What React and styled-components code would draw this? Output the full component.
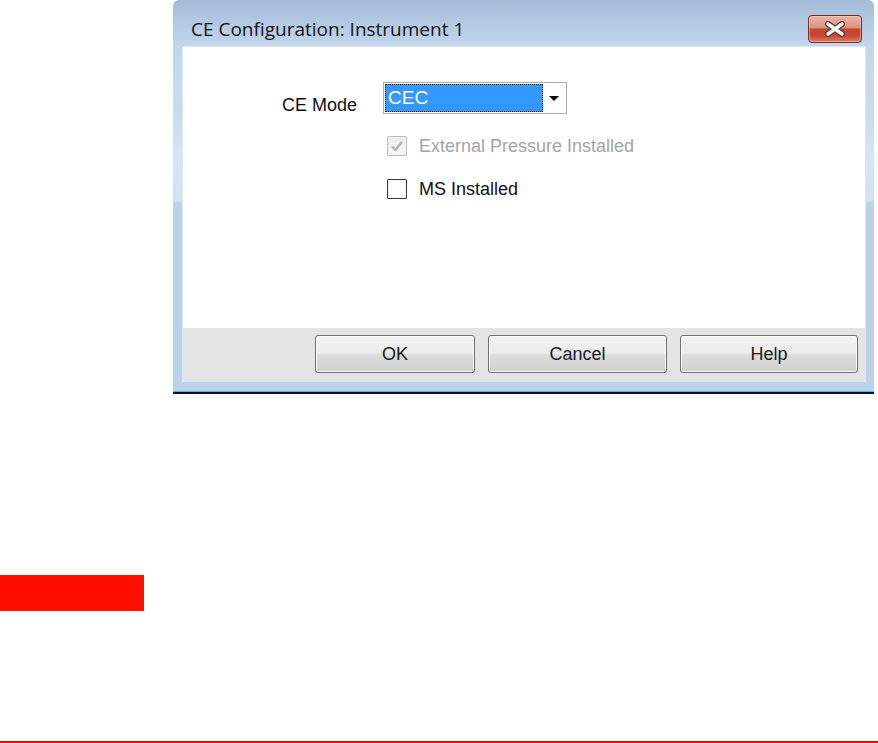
import styled, { createGlobalStyle } from 'styled-components'

const uiFont = `"Liberation Sans", Arial, sans-serif`

const GlobalStyle = createGlobalStyle`
  html, body {
    margin: 0;
    padding: 0;
    background: #ffffff;
  }
  body {
    font-family: "Liberation Sans", Arial, sans-serif;
  }
`

const Page = styled.div`
  width: 878px;
  height: 743px;
  display: flex;
  flex-direction: column;
  overflow: hidden;
`

const WindowShadow = styled.div`
  margin-left: 173px;
  width: 701px;
  border-bottom: 2px solid #111111;
`

const Window = styled.div`
  height: 392px;
  box-sizing: border-box;
  display: flex;
  flex-direction: column;
  padding: 0 9px 10px 10px;
  border-radius: 6px 6px 0 0;
  border-bottom: 1px solid #49c0e2;
  background: linear-gradient(
    180deg,
    #a4bbd7 0px,
    #b4cae4 24px,
    #c3d7ed 48px,
    #cadcf0 120px,
    #d6e4f3 150px,
    #d4e2f2 200px,
    #bcd2ea 203px,
    #bcd2ea 100%
  );
`

const TitleBar = styled.div`
  height: 48px;
  box-sizing: border-box;
  padding: 10px 3px 0 8px;
  display: flex;
  align-items: flex-start;
  justify-content: space-between;
`

const Title = styled.div`
  height: 28px;
  display: flex;
  align-items: center;
  font-family: "Open Sans", "Noto Sans", sans-serif;
  font-size: 19px;
  color: #141414;
  margin-top: 5px;
`

const CloseButton = styled.div`
  width: 54px;
  height: 28px;
  margin-top: 5px;
  box-sizing: border-box;
  border: 1px solid #6a2f2b;
  border-radius: 4px;
  display: flex;
  align-items: center;
  justify-content: center;
  box-shadow: inset 0 0 0 1px rgba(255, 210, 195, 0.55);
  background: linear-gradient(
    180deg,
    #eab3a4 0%,
    #dc9282 45%,
    #c8462c 50%,
    #c44a30 75%,
    #dc7b5e 100%
  );
`

const Content = styled.div`
  flex: 1;
  display: flex;
  flex-direction: column;
  box-shadow: 0 0 0 1px #dbe7f5;
`

const Body = styled.div`
  height: 281px;
  box-sizing: border-box;
  background: #ffffff;
  padding: 35px 0 0 99px;
  font-family: ${uiFont};
  font-size: 18px;
  color: #111111;
`

const FieldRow = styled.div`
  display: flex;
  align-items: flex-start;
`

const Label = styled.div`
  width: 101px;
  padding-top: 13px;
  line-height: 20px;
`

const Combo = styled.div`
  width: 184px;
  height: 32px;
  box-sizing: border-box;
  border: 1px solid #acacac;
  padding: 1px;
  display: flex;
  background: #ffffff;
`

const Selection = styled.div`
  flex: 1;
  box-sizing: border-box;
  border: 1px dotted #1e1e1e;
  background: #3399ff;
  color: #ffffff;
  font-size: 19px;
  line-height: 26px;
  padding-left: 2px;
`

const DropButton = styled.div`
  width: 22px;
  display: flex;
  align-items: center;
  justify-content: center;

  &::after {
    content: '';
    border-left: 5px solid transparent;
    border-right: 5px solid transparent;
    border-top: 5px solid #000000;
  }
`

const Checks = styled.div`
  margin: 20px 0 0 105px;
  display: flex;
  flex-direction: column;
  gap: 22px;
`

const CheckRow = styled.label`
  display: flex;
  align-items: center;
  gap: 12px;
  height: 21px;
  line-height: 22px;
  color: ${(p) => (p.disabled ? '#a4a4a4' : '#111111')};
`

const Box = styled.span`
  width: 20px;
  height: 20px;
  box-sizing: border-box;
  border: 1px solid ${(p) => (p.disabled ? '#bcbcbc' : '#3c3c3c')};
  border-radius: 1px;
  display: flex;
  align-items: center;
  justify-content: center;
  background: ${(p) =>
    p.disabled ? 'linear-gradient(180deg, #eeeeee, #f7f7f7)' : '#ffffff'};
  box-shadow: inset 0 0 0 1px ${(p) => (p.disabled ? '#f4f4f4' : '#f2f2f2')};
`

const Footer = styled.div`
  height: 53px;
  box-sizing: border-box;
  background: #e4e4e4;
  padding: 7px 7px 0 0;
  display: flex;
  justify-content: flex-end;
  align-items: flex-start;
  gap: 13px;
`

const Button = styled.div`
  width: ${(p) => p.width}px;
  height: 38px;
  box-sizing: border-box;
  border: 1px solid #707070;
  border-radius: 3px;
  display: flex;
  align-items: center;
  justify-content: center;
  font-family: ${uiFont};
  font-size: 18px;
  color: #1a1a1a;
  box-shadow: inset 0 0 0 1px #fbfbfb;
  background: linear-gradient(
    180deg,
    #f3f3f3 0%,
    #ebebeb 48%,
    #dddddd 52%,
    #d0d0d0 100%
  );
`

const RedTab = styled.div`
  margin-top: 181px;
  width: 144px;
  height: 36px;
  flex-shrink: 0;
  background: #ff1000;
`

const RedRule = styled.div`
  margin-top: 130px;
  height: 2px;
  flex-shrink: 0;
  background: #ff0000;
`

function CloseGlyph() {
  return (
    <svg width="24" height="16" viewBox="0 0 24 16">
      <path
        d="M5 3 L19 13 M19 3 L5 13"
        stroke="#5a3a36"
        strokeWidth="6"
        strokeLinecap="round"
        fill="none"
      />
      <path
        d="M5 3 L19 13 M19 3 L5 13"
        stroke="#ffffff"
        strokeWidth="3.4"
        strokeLinecap="round"
        fill="none"
      />
    </svg>
  )
}

function CheckMark({ color }) {
  return (
    <svg width="14" height="14" viewBox="0 0 14 14">
      <path
        d="M2 7.5 L5.5 11 L12 3"
        stroke={color}
        strokeWidth="2.4"
        fill="none"
      />
    </svg>
  )
}

function Checkbox({ label, checked, disabled }) {
  return (
    <CheckRow disabled={disabled}>
      <Box disabled={disabled}>
        {checked && <CheckMark color={disabled ? '#b2b2b2' : '#222222'} />}
      </Box>
      {label}
    </CheckRow>
  )
}

export default function App() {
  return (
    <>
      <GlobalStyle />
      <Page>
        <WindowShadow>
          <Window>
            <TitleBar>
              <Title>CE Configuration: Instrument 1</Title>
              <CloseButton>
                <CloseGlyph />
              </CloseButton>
            </TitleBar>
            <Content>
              <Body>
                <FieldRow>
                  <Label>CE Mode</Label>
                  <Combo>
                    <Selection>CEC</Selection>
                    <DropButton />
                  </Combo>
                </FieldRow>
                <Checks>
                  <Checkbox label="External Pressure Installed" checked disabled />
                  <Checkbox label="MS Installed" />
                </Checks>
              </Body>
              <Footer>
                <Button width={160}>OK</Button>
                <Button width={179}>Cancel</Button>
                <Button width={178}>Help</Button>
              </Footer>
            </Content>
          </Window>
        </WindowShadow>
        <RedTab />
        <RedRule />
      </Page>
    </>
  )
}
